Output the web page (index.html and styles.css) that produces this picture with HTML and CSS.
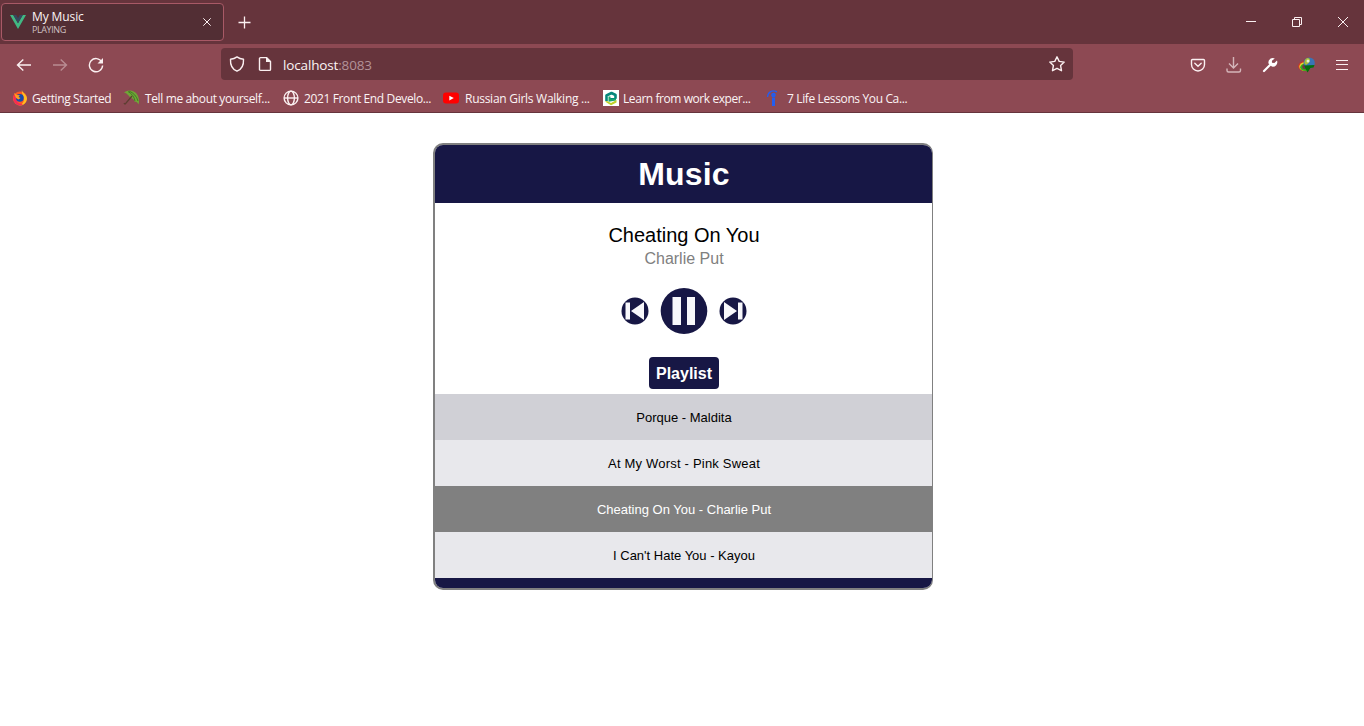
FILE: index.html
```html
<!DOCTYPE html>
<html lang="en">
<head>
<meta charset="utf-8">
<title>My Music</title>
<link rel="stylesheet" href="styles.css">
</head>
<body>
<header class="browser">
  <div class="tabbar">
    <div class="tab">
      <svg class="vue" width="16" height="16" viewBox="0 0 16 16"><path fill="#41b883" d="M0 1h3.2L8 9.3 12.8 1H16L8 15z"/><path fill="#35495e" d="M3.2 1h3L8 4.2 9.8 1h3L8 9.3z"/></svg>
      <div class="tab-label"><span class="tab-title">My Music</span><span class="tab-state">PLAYING</span></div>
      <svg class="tab-close" width="10" height="10" viewBox="0 0 10 10"><path class="line" d="m1.3 1.3 7.4 7.4m0-7.4L1.3 8.7"/></svg>
    </div>
    <svg class="newtab" width="13" height="13" viewBox="0 0 13 13"><path class="line" stroke-width="1.3" d="M6.500 .5v12M.5 6.500h12"/></svg>
    <div class="window-controls">
      <svg width="10" height="10" viewBox="0 0 10 10"><path class="line" d="M0 4.500h10"/></svg>
      <svg width="10" height="10" viewBox="0 0 10 10"><path class="line" d="M.5 2.500h7v7h-7zM2.500 2.500v-2h7v7h-2"/></svg>
      <svg width="10" height="10" viewBox="0 0 10 10"><path class="line" d="m0 0 10 10M10 0 0 10"/></svg>
    </div>
  </div>
  <nav class="navbar">
    <svg class="back" width="16" height="16" viewBox="0 0 16 16"><path class="line thick" d="M15 8H1.500m5.800-5.500L1.500 8l5.800 5.500"/></svg>
    <svg class="forward" width="16" height="16" viewBox="0 0 16 16"><path class="line thick" d="M1 8h13.500M8.700 2.500 14.500 8l-5.800 5.500"/></svg>
    <svg class="reload" width="16" height="16" viewBox="0 0 16 16"><path class="line thick" d="M13.800 5A6.600 6.600 0 1 0 14.600 8.500"/><path fill="#fbf0f1" d="M15 1v5.500H9.500z"/></svg>
    <div class="address">
      <svg width="16" height="16" viewBox="0 0 16 16"><path class="line thick" stroke-linejoin="round" d="M8 .9C6 2.400 4 3 1.500 3.200 1.200 8.500 3 13.200 8 15.200c5-2 6.800-6.700 6.500-12C12 3 10 2.400 8 .900z"/></svg>
      <svg width="16" height="16" viewBox="0 0 16 16"><path class="line thick" stroke-linejoin="round" d="M3.500 1.600h6l4 4v7.800a1 1 0 0 1-1 1h-9a1 1 0 0 1-1-1V2.600a1 1 0 0 1 1-1z"/><path fill="#fbf0f1" d="M9 1v5h5z"/></svg>
      <span class="url">localhost<span class="port">:8083</span></span>
      <svg class="star" width="18" height="18" viewBox="0 0 18 18"><path class="line thick" stroke-linejoin="round" d="m9 1.800 2.200 4.600 5 .7-3.600 3.500.9 5.100L9 13.300l-4.500 2.400.9-5.100L1.800 7.100l5-.7z"/></svg>
    </div>
    <div class="tools">
      <svg width="16" height="16" viewBox="0 0 16 16"><path class="line thick" stroke-linejoin="round" d="M2.500 2.500h11a1 1 0 0 1 1 1v4a6.500 6.500 0 0 1-13 0v-4a1 1 0 0 1 1-1z"/><path class="line thick" stroke-linecap="round" d="m4.800 6.300 3.200 3 3.200-3"/></svg>
      <svg class="download" width="16" height="16" viewBox="0 0 16 16"><path class="line thick" d="M7.500 0v11M3 6.500l4.500 4.500L12 6.500M1 11.500v2a1.500 1.500 0 0 0 1.500 1.500h10.500a1.500 1.500 0 0 0 1.500-1.500v-2"/></svg>
      <svg width="16" height="16" viewBox="0 0 16 16"><path stroke="#fff" stroke-width="2.200" stroke-linecap="round" d="m2 14 7-7"/><path fill="#fff" d="M12.800 1.400A4.500 4.500 0 0 0 6.500 6.400L9.800 9.600A4.500 4.500 0 0 0 15 3.600L12.400 6 10 5.800 9.900 3.800z"/></svg>
      <svg width="18" height="16" viewBox="0 0 18 16"><ellipse cx="6.500" cy="9.300" rx="6.300" ry="5" fill="#cf3824"/><ellipse cx="6.900" cy="9.700" rx="5.600" ry="4.400" fill="#e8d52c"/><ellipse cx="7.200" cy="10.300" rx="5" ry="3.700" fill="#37a71e"/><ellipse cx="7.700" cy="9.800" rx="3.500" ry="2.500" fill="#703746"/><circle cx="11.200" cy="6" r="5.600" fill="#3974b6"/><path fill="#a9bf38" d="M7 3c2-3 5-2 5 0s-2 4-4 5C6 7 6 5 7 3z"/><circle cx="10" cy="4" r="1.500" fill="#e5efd8"/><path fill="#066e0d" d="m6 8.500 10.500-.5-1 2.500-3 .5-3 4.500z"/></svg>
      <svg class="menu" width="12" height="12" viewBox="0 0 12 12"><path class="line" stroke-linecap="butt" d="M0 1.500h12M0 5.500h12M0 10.500h12"/></svg>
    </div>
  </nav>
  <div class="bookmarks">
    <div class="bookmark b1"><svg width="16" height="16" viewBox="0 0 16 16"><circle cx="8" cy="8.500" r="7" fill="#ff5a22"/><path fill="#ffbe21" d="M10 0c0 3 5 4 5 9a7 7 0 0 1-9 6c4 0 6-3 6-6S9 4 10 0z"/><path fill="#f52a58" d="M2 4c-1 4-1 9 4 11 2 1 4 0 5-1-4 0-7-2-7-6z"/><circle cx="7.800" cy="7.800" r="3.900" fill="#174cad"/><path fill="#ff9d20" d="m2 3 3 2 3 .2L6.500 7l2 1-2 1.500L4 8z"/></svg><span>Getting Started</span></div>
    <div class="bookmark b2"><svg width="17" height="16" viewBox="0 0 17 16"><path fill="#70a537" d="M1 2.500C5-1 12 0 14.500 5c1.500 3 2 6 1 9.500-1-2-2-3-4-3-.5-2-2-3.500-4-3.500C6 6 4 3 1 2.500z"/><path fill="none" stroke="#437b24" d="M5 1.500Q11 5 12 11M6 1q7 3 9 10"/><path fill="none" stroke="#5d3e30" stroke-width="1.300" d="M9 6 3 13q-1 2-2 0"/></svg><span>Tell me about yourself...</span></div>
    <div class="bookmark b3"><svg width="16" height="16" viewBox="0 0 16 16"><circle class="line thick" cx="8" cy="8" r="6.900"/><ellipse class="line thick" cx="8" cy="8" rx="3.400" ry="6.900"/><path class="line thick" d="M1 8h14"/></svg><span>2021 Front End Develo...</span></div>
    <div class="bookmark b4"><svg width="16" height="16" viewBox="0 0 16 16"><rect y="2.500" width="16" height="11" rx="3" fill="red"/><path fill="#fff" d="m6.300 5.800 4.500 2.300-4.500 2.300z"/></svg><span>Russian Girls Walking ...</span></div>
    <div class="bookmark b5"><svg width="16" height="16" viewBox="0 0 16 16"><path fill="#fff" d="M0 0h16v16H0z"/><path fill="none" stroke="#07877b" stroke-width="2.600" stroke-linejoin="round" d="M3.500 11V5.500L8.500 3l4 2v3L7 9.500"/><path fill="none" stroke="#19a66b" stroke-width="2" d="M6.500 6.500v4l6.500-1"/><path fill="#bed027" d="m2 11.500 2-.5 4 2 5.500-3v2.500L8 15.300z"/></svg><span>Learn from work exper...</span></div>
    <div class="bookmark b6"><svg width="16" height="16" viewBox="0 0 16 16"><circle cx="8.500" cy="5" r="2.300" fill="#235df0"/><path fill="#235df0" d="M7 7.500h3V16H7z"/><path fill="none" stroke="#235df0" stroke-width="1.300" d="M2.500 7C3 2 7-.500 12 1.800"/></svg><span>7 Life Lessons You Ca...</span></div>
  </div>
</header>
<main class="player">
  <h1>Music</h1>
  <section class="now">
    <div class="song">Cheating On You</div>
    <div class="artist">Charlie Put</div>
    <div class="controls">
      <svg width="28" height="28" viewBox="0 0 28 28"><circle cx="14" cy="14" r="13.500" fill="#171745"/><path fill="#f8f8fb" d="M4.500 5.500H9v17H4.500zM23 5v18L10 14z"/></svg>
      <svg width="48" height="48" viewBox="0 0 48 48"><ellipse cx="24" cy="24" rx="23.300" ry="22.900" fill="#171745"/><path fill="#f8f8fb" d="M12.500 10H21v28h-8.500zM27 10h8v28h-8z"/></svg>
      <svg width="28" height="28" viewBox="0 0 28 28"><circle cx="14" cy="14" r="13.500" fill="#171745"/><path fill="#f8f8fb" d="M19 5.500h4.500v17H19zM5 5v18l13-9z"/></svg>
    </div>
    <div class="playlist-title">Playlist</div>
  </section>
  <ul class="playlist">
    <li class="hover">Porque - Maldita</li>
    <li class="wide">At My Worst - Pink Sweat</li>
    <li class="active">Cheating On You - Charlie Put</li>
    <li>I Can't Hate You - Kayou</li>
  </ul>
  <footer class="base"></footer>
</main>
</body>
</html>
```
FILE: styles.css
```css
* { box-sizing: border-box; }
body { margin: 0; background: #fff; font-family: "Liberation Sans", Arial, sans-serif; }
svg { display: block; flex: none; }
.line { fill: none; stroke: #fbf0f1; }
.thick { stroke-width: 1.4; }
.browser { height: 113px; background: #8d4953; border-bottom: 1px solid #66343c; font-family: "Open Sans", "Noto Sans", sans-serif; color: #fbf4f5; }
.tabbar { height: 44px; background: #66343c; display: flex; align-items: center; }
.tab { width: 223px; height: 38px; margin-left: 1px; border: 1px solid #a85966; border-radius: 4px; background: #522e34; display: flex; align-items: center; padding: 0 11px 0 8px; }
.tab-label { display: flex; flex-direction: column; margin-left: 6px; flex: 1; padding-top: 1px; }
.tab-title { font-size: 12px; line-height: 15px; letter-spacing: -.1px; }
.tab-state { font-size: 9px; line-height: 12px; letter-spacing: -.4px; color: #cfc0c2; }
.newtab { margin: 1px 0 0 14px; }
.window-controls { display: flex; gap: 36px; margin-left: auto; padding-right: 16px; }
.navbar { height: 40px; padding-top: 1px; display: flex; align-items: center; }
.back { margin-left: 16px; }
.forward { margin-left: 20px; opacity: .4; }
.reload { margin-left: 20px; }
.address { width: 852px; height: 32px; margin: -1px 0 0 117px; border-radius: 4px; background: #66343c; display: flex; align-items: center; padding: 0 7px 0 8px; gap: 12px; }
.url { font-size: 13.5px; margin: 1px 0 0 -2px; letter-spacing: -.15px; }
.port { color: #b39298; }
.star { margin-left: auto; }
.tools { display: flex; align-items: center; gap: 20px; margin-left: auto; padding-right: 16px; }
.download { opacity: .65; }
.tools .menu { margin-left: 0; }
.bookmarks { height: 28px; display: flex; align-items: center; padding-left: 12px; font-size: 12px; white-space: nowrap; }
.bookmark { display: flex; align-items: center; gap: 4px; }
.bookmark span { letter-spacing: -.37px; padding-top: 1px; }
.b1 { width: 111px; }
.b2 { width: 160px; }
.b3 { width: 160px; }
.b4 { width: 160px; }
.b5 { width: 162px; }
.b2 { gap: 5px; }
.b3 { gap: 5px; }
.b4 { gap: 6px; }
.b6 { gap: 6px; }
.bookmark.b4 span { letter-spacing: -.27px; }
.bookmark.b5 span { letter-spacing: -.43px; }
.player { width: 500px; height: 447px; margin: 30px 0 0 433px; border: 2px solid #808080; border-right-width: 1px; border-radius: 10px; overflow: hidden; text-align: center; }
.player h1 { height: 58px; margin: 0; background: #171745; color: #fff; font-size: 32px; line-height: 59px; padding-left: 1px; letter-spacing: .2px; }
.now { height: 191px; display: flex; flex-direction: column; align-items: center; padding-top: 20px; }
.song { font-size: 20px; line-height: 24px; padding-left: 1px; }
.artist { color: #808080; font-size: 16px; line-height: 24px; padding-left: 1px; }
.controls { display: flex; align-items: center; gap: 11px; margin-top: 16px; padding-left: 1px; }
.playlist-title { height: 32px; width: 70px; margin-top: 22px; border-radius: 4px; background: #171745; color: #fff; font-size: 16px; font-weight: bold; line-height: 33px; padding-left: 1px; }
.playlist { list-style: none; margin: 0; padding: 0; font-size: 13px; }
.playlist li { height: 46px; line-height: 47px; background: #e8e8ec; padding-left: 1px; }
.playlist .wide { letter-spacing: .2px; }
.playlist .hover { background: #d0d0d6; }
.playlist .active { background: #808080; color: #fff; }
.base { height: 10px; background: #171745; }
```
